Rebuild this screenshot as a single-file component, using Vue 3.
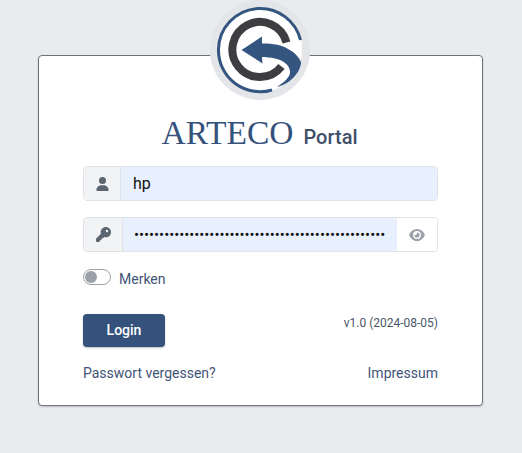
<script setup>
import { ref } from "vue";

const user = ref("hp");
const pass = ref("xxxxxxxxxxxxxxxxxxxxxxxxxxxxxxxxxxxxxxxxxxxxxxxxxx");
</script>

<template>
  <main class="page">
    <div class="card">
      <div class="logo">
        <svg viewBox="0 0 100 100" width="100" height="100">
          <circle cx="50" cy="50" r="46" fill="#fff" stroke="#e3e5e8" stroke-width="8" />
          <path d="M90.500 40 A41.500 41.500 0 0 0 48 8.500 A41.500 41.500 0 0 0 8.500 51 A41.500 41.500 0 0 0 62 90" fill="none" stroke="#34557f" stroke-width="3" />
          <path d="M76.500 42.500 A27.500 27.500 0 1 0 71.500 66.500" fill="none" stroke="#3d3d42" stroke-width="8" />
          <path d="M31.500 50 L52 36.500 L52 43.500 C64 43.500 72 45 78 49 C84 52 89 57 91 62 C91 72 80 84 67 87 C75 82 81 76 80 71 C79 64 72 60 65 58.500 C60 57.500 56 57 52 57 L52.500 63.500 Z" fill="#34557f" />
        </svg>
      </div>
      <h1 class="title"><span class="brand">ARTECO</span> <span class="sub">Portal</span></h1>

      <div class="group">
        <span class="addon user-addon">
          <svg viewBox="0 0 448 512" width="13" height="14"><path fill="#5c6670" d="M224 256a128 128 0 1 0 0-256 128 128 0 0 0 0 256zm-45.700 48C79.800 304 0 383.800 0 482.300 0 498.700 13.300 512 29.700 512h388.600c16.400 0 29.700-13.300 29.700-29.700C448 383.800 368.200 304 269.700 304h-91.400z" /></svg>
        </span>
        <input v-model="user" class="field user-field" type="text" />
      </div>

      <div class="group">
        <span class="addon key-addon">
          <svg viewBox="0 0 512 512" width="15" height="15"><path fill="#5c6670" d="M336 352c97.200 0 176-78.800 176-176S433.200 0 336 0 160 78.800 160 176c0 18.700 2.900 36.800 8.300 53.700L7 391c-4.500 4.500-7 10.600-7 17v80c0 13.300 10.700 24 24 24h80c13.300 0 24-10.700 24-24v-40h40c13.300 0 24-10.700 24-24v-40h40c6.400 0 12.500-2.500 17-7l33.300-33.300c16.900 5.400 35 8.300 53.700 8.300zm40-256a40 40 0 1 1 0 80 40 40 0 0 1 0-80z" /></svg>
        </span>
        <input v-model="pass" class="field pass-field" type="password" />
        <span class="eye">
          <svg viewBox="0 0 576 512" width="16" height="14"><path fill="#9ba1a8" d="M288 32C207 32 142 69 95 113 48 156 17 208 2 244c-3 8-3 16 0 24 15 36 46 88 93 131 47 44 112 81 193 81s146-37 193-81c47-43 78-95 93-131 3-8 3-16 0-24-15-36-46-88-93-131C434 69 369 32 288 32zM144 256a144 144 0 1 1 288 0 144 144 0 0 1-288 0zm144-64c0 35-29 64-64 64-7 0-14-1-20-3-6-2-12 1-12 7 0 7 1 14 3 21 14 51 67 82 118 68s82-67 68-118c-11-41-48-69-88-71-6 0-9 6-7 12 2 6 2 13 2 20z" /></svg>
        </span>
      </div>

      <label class="remember">
        <span class="switch"><span class="knob"></span></span>
        <span class="remember-text">Merken</span>
      </label>

      <div class="actions">
        <button class="login" type="button">Login</button>
        <span class="version">v1.0 (2024-08-05)</span>
      </div>

      <div class="links">
        <a>Passwort vergessen?</a>
        <a>Impressum</a>
      </div>
    </div>
  </main>
</template>

<style>
html, body {
  margin: 0;
  background: #e9ecef;
}
</style>

<style scoped>
.page {
  min-height: 453px;
  box-sizing: border-box;
  padding: 55px 39px 0 38px;
  font-family: Roboto, "Liberation Sans", sans-serif;
  color: #3f5578;
}

.card {
  position: relative;
  box-sizing: border-box;
  height: 351px;
  padding: 58px 44px 0;
  background: #fff;
  border: 1px solid #6f747b;
  border-radius: 4px;
  box-shadow: 0 1px 2px rgba(0, 0, 0, 0.2);
}

.logo {
  position: absolute;
  left: 171px;
  top: -56px;
  width: 100px;
  height: 100px;
}

.title {
  margin: 0 0 14px;
  height: 38px;
  line-height: 38px;
  font-weight: 400;
  text-align: center;
  white-space: nowrap;
  padding-right: 2px;
  box-sizing: border-box;
}

.brand {
  font-family: "Liberation Serif", serif;
  font-size: 33.5px;
  color: #34527c;
}

.sub {
  margin-left: 2px;
  font-size: 20px;
  font-weight: 500;
  color: #3f4f6a;
}

.group {
  display: flex;
  height: 35px;
  margin-bottom: 16px;
  box-sizing: border-box;
  border: 1px solid #dfe2e6;
  border-radius: 4px;
  overflow: hidden;
}

.addon {
  display: flex;
  align-items: center;
  justify-content: center;
  flex: none;
  background: #f1f3f5;
  border-right: 1px solid #dfe2e6;
}

.user-addon {
  width: 36px;
}

.key-addon {
  width: 38px;
}

.field {
  flex: 1;
  min-width: 0;
  border: 0;
  outline: 0;
  padding: 0 11px;
  background: #e8f0fe;
  font-family: inherit;
  font-size: 14.9px;
  color: #111;
}

.user-field {
  padding: 0 12px;
  font-size: 16px;
}

.eye {
  display: flex;
  align-items: center;
  justify-content: center;
  flex: none;
  width: 40px;
  background: #fff;
}

.remember {
  display: flex;
  align-items: center;
  gap: 8px;
  height: 18px;
  font-size: 14px;
}

.remember-text {
  position: relative;
  top: 2px;
}

.switch {
  display: block;
  box-sizing: border-box;
  width: 28px;
  height: 16px;
  padding: 1px;
  border: 1px solid #9ba1a8;
  border-radius: 8px;
}

.knob {
  display: block;
  width: 12px;
  height: 12px;
  border-radius: 50%;
  background: #9ba1a8;
}

.actions {
  display: flex;
  justify-content: space-between;
  align-items: flex-start;
  margin-top: 28px;
}

.login {
  width: 82px;
  height: 33px;
  padding: 0 0 1px;
  border: 0;
  border-radius: 4px;
  background: #34527c;
  color: #fff;
  font-family: inherit;
  font-size: 14px;
  font-weight: 500;
  box-shadow: 0 1px 2px rgba(0, 0, 0, 0.25);
}

.version {
  margin-top: 1px;
  font-size: 12px;
  line-height: 16px;
  color: #4a5666;
}

.links {
  display: flex;
  justify-content: space-between;
  margin-top: 16px;
  font-size: 14px;
  line-height: 20px;
}
</style>
